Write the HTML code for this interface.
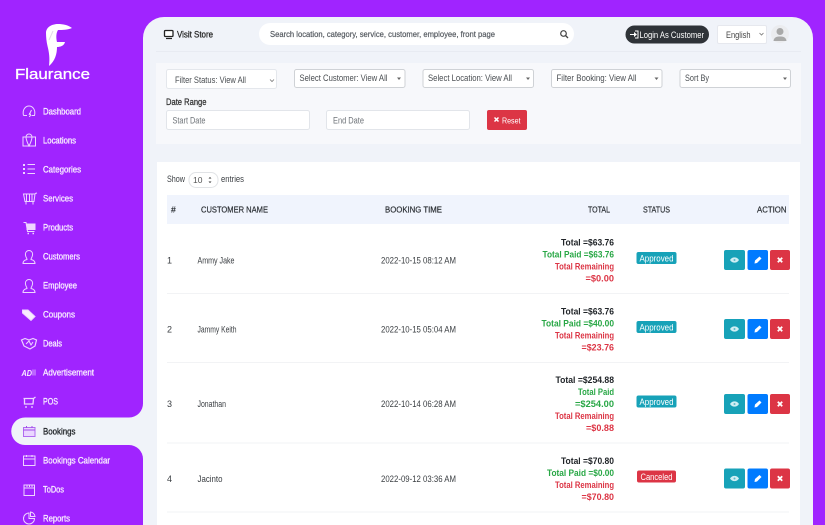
<!DOCTYPE html>
<html lang="en"><head><meta charset="utf-8"><title>Flaurance Bookings</title>
<style>
html,body{margin:0;padding:0;width:825px;height:525px;overflow:hidden;background:#a024ff}
svg{display:block}
text{font-family:"Liberation Sans",sans-serif;font-size:9px;fill:#2b2f33}
.nav{fill:#f8ecff;font-size:9px;stroke:#f8ecff;stroke-width:.3}
.ic{fill:none;stroke:#eed4ff;stroke-width:1}
.g{fill:#28a745;font-weight:bold;text-anchor:end}
.r{fill:#dc3545;font-weight:bold;text-anchor:end}
.k{fill:#212529;font-weight:bold;text-anchor:end}
.h{fill:#2a2e33;font-size:8.5px;stroke:#2a2e33;stroke-width:.2}
.m{fill:#555a60}
.w{fill:#fff}
.s{fill:#4a4e52}
.t{fill:#3a3e42}
</style></head><body>
<svg width="825" height="525" viewBox="0 0 825 525" xmlns="http://www.w3.org/2000/svg">
<rect width="825" height="525" fill="#a024ff"/>
<!-- main panel -->
<path d="M143 38a21 21 0 0 1 21-21H792a21 21 0 0 1 21 21V525H143Z" fill="#f0f3f9"/>
<!-- active nav -->
<rect x="125" y="400" width="20" height="62" fill="#f0f3f9"/>
<path d="M125 399H143V403A14 14 0 0 1 129 417.500H125Z" fill="#a024ff"/>
<path d="M125 445H129A14 14 0 0 1 143 459V464H125Z" fill="#a024ff"/>
<path d="M143 417.500H25A13.750 13.750 0 0 0 25 445H143Z" fill="#f0f3f9"/>
<!-- logo -->
<path d="M46 33C46 27 52 24 58 24C63 24 68 25 72 28C68 30 62 30 58 30C56 33 56 38 57 42L65 42C64 46 60 47 57 47C57 54 55 61 49 66C50 58 49 52 47.500 46C46.500 42 46 37 46 33Z" fill="#fff"/>
<path d="M53 31L49 40" stroke="#e2dbe8" stroke-width="1" fill="none"/>
<text x="15" y="79" class="w" style="font-size:15px;stroke:#fff;stroke-width:.3" textLength="75" lengthAdjust="spacingAndGlyphs">Flaurance</text>
<!-- nav icons -->
<g class="ic">
<path d="M23.500 115.500C22 109 26 106 29 106S36 109 34.500 115.500H31.500M27 115.500H23.500M29 115L31.500 110M29 116.500a1.500 1.500 0 0 0 0-3"/>
<path d="M23 137H26M32 137H35.500V146H23V137ZM29 134a3 3 0 0 1 3 3C32 140 29 146 29 146S26 140 26 137a3 3 0 0 1 3-3Z"/>
<path d="M27.500 164.500H35M27.500 169H35M27.500 173.500H35"/>
<path d="M23.500 194H35L34 201.500H25ZM26.500 194V201M29.500 194V201M32 194V201M26 202V204.500M33 202V204.500M35 193.500l2-.5"/>
<path d="M23.500 222.500H26L27.500 231.500H34.500"/>
<path d="M27 224H35V229.500H27Z" fill="#eed4ff"/>
<path d="M27.500 233.500h1.500M32.500 233.500h1.500" stroke-width="1.500"/>
<path d="M29 250.500a3.600 3.600 0 0 1 3.600 3.600C32.600 257.500 31 258 31 259.500C33.500 260 35 261 35 263.500H23C23 261 24.500 260 27 259.500C27 258 25.400 257.500 25.400 254.100A3.600 3.600 0 0 1 29 250.500Z"/>
<path d="M29 279.500a3.600 3.600 0 0 1 3.600 3.600C32.600 286.500 31 287 31 288.500C33.500 289 35 290 35 292.500H23C23 290 24.500 289 27 288.500C27 287 25.400 286.500 25.400 283.100A3.600 3.600 0 0 1 29 279.500Z"/>
<path d="M22.500 310H28L35 316.500L31 320.500L22.500 313Z" fill="#f8ecff"/>
<path d="M21.500 340L25 338.500L29 340L33 338.500L36.500 340L35 346L30 349L24 346Z" stroke-width="1.200"/>
<path d="M26 344L29 341L31 345L33 342"/>
<path d="M23.500 398.500H33.500L33 404H24.500V398.500M25 407h2M31 407h2M33.500 398.500l2-1.500" stroke-width="1.300"/>
<path d="M23.500 456H35V465.500H23.500ZM23.500 459H35M26.500 455V457M32 455V457"/>
<path d="M24 485H34.500V495.500H24ZM24 488H34.500M27 485V487M29.500 485V487M32 485V487"/>
<path d="M29 513a5.500 5.500 0 1 0 5.500 5.500H29ZM30.500 512a5 5 0 0 1 4.500 4.500H30.500Z"/>
</g>
<path d="M23.500 427.500H35V436.500H23.500Z" fill="#ead6ff" stroke="#b06cf0"/>
<path d="M23.500 430H35M26.500 426V428M32 426V428" stroke="#a24ee8" fill="none"/>
<rect x="23" y="164" width="2" height="2" fill="#eed4ff"/><rect x="23" y="168" width="2" height="2" fill="#eed4ff"/><rect x="23" y="172" width="2" height="2" fill="#eed4ff"/>
<text x="21.500" y="376" style="font-size:8.500px;font-weight:bold;font-style:italic;fill:#f8ecff" textLength="10.500" lengthAdjust="spacingAndGlyphs">AD</text>
<path d="M33 369.500V375.500M35 369.500V375.500" stroke="#d9a8ff" fill="none"/>
<!-- nav labels -->
<text x="43" y="114.500" class="nav" textLength="38" lengthAdjust="spacingAndGlyphs">Dashboard</text>
<text x="43" y="143.500" class="nav" textLength="33" lengthAdjust="spacingAndGlyphs">Locations</text>
<text x="43" y="172.500" class="nav" textLength="38" lengthAdjust="spacingAndGlyphs">Categories</text>
<text x="43" y="201.500" class="nav" textLength="30" lengthAdjust="spacingAndGlyphs">Services</text>
<text x="43" y="230.500" class="nav" textLength="30" lengthAdjust="spacingAndGlyphs">Products</text>
<text x="43" y="259.500" class="nav" textLength="37" lengthAdjust="spacingAndGlyphs">Customers</text>
<text x="43" y="288.500" class="nav" textLength="34" lengthAdjust="spacingAndGlyphs">Employee</text>
<text x="43" y="317.500" class="nav" textLength="32" lengthAdjust="spacingAndGlyphs">Coupons</text>
<text x="43" y="346.500" class="nav" textLength="19" lengthAdjust="spacingAndGlyphs">Deals</text>
<text x="43" y="375.500" class="nav" textLength="51" lengthAdjust="spacingAndGlyphs">Advertisement</text>
<text x="43" y="404.500" class="nav" textLength="15" lengthAdjust="spacingAndGlyphs">POS</text>
<text x="43" y="434.500" style="fill:#212529;stroke:#212529;stroke-width:.3" textLength="32.500" lengthAdjust="spacingAndGlyphs">Bookings</text>
<text x="43" y="463.500" class="nav" textLength="67" lengthAdjust="spacingAndGlyphs">Bookings Calendar</text>
<text x="43" y="492.500" class="nav" textLength="21" lengthAdjust="spacingAndGlyphs">ToDos</text>
<text x="43" y="521.500" class="nav" textLength="27" lengthAdjust="spacingAndGlyphs">Reports</text>
<!-- topbar -->
<rect x="164.500" y="30.500" width="8.500" height="6" rx="1" fill="#fff" stroke="#222" stroke-width="1.300"/>
<path d="M166 38.500H172" stroke="#222" stroke-width="1.200"/>
<text x="177" y="37.500" style="fill:#222;stroke:#222;stroke-width:.25" textLength="36" lengthAdjust="spacingAndGlyphs">Visit Store</text>
<rect x="259" y="23" width="315" height="22" rx="11" fill="#fff"/>
<text x="270" y="37" class="m" style="font-size:8.500px;stroke:#555a60;stroke-width:.2" textLength="225" lengthAdjust="spacingAndGlyphs">Search location, category, service, customer, employee, front page</text>
<circle cx="563.500" cy="33.500" r="2.800" fill="none" stroke="#444" stroke-width="1.200"/>
<path d="M565.500 35.500L568 38" stroke="#444" stroke-width="1.300"/>
<rect x="625.500" y="25.500" width="83.500" height="18" rx="9" fill="#2f3338"/>
<path d="M630 35H634V37L637 34.500L634 32V34H630Z" fill="#fff"/>
<path d="M635 31H638V38H635" fill="none" stroke="#fff" stroke-width="1"/>
<text x="639.500" y="38" class="w" textLength="64.500" lengthAdjust="spacingAndGlyphs">Login As Customer</text>
<rect x="717.500" y="25.500" width="49" height="18" rx="1.500" fill="#fff" stroke="#e6e8ee"/>
<text x="726" y="38" style="fill:#444" textLength="24.500" lengthAdjust="spacingAndGlyphs">English</text>
<path d="M759.500 33L761.500 35L763.500 33" fill="none" stroke="#777" stroke-width=".8"/>
<circle cx="780" cy="34" r="9" fill="#ebecef"/>
<circle cx="780" cy="31.500" r="3.500" fill="#a9a9a9"/>
<path d="M773.500 41C774 37 777 36.500 780 36.500S786 37 786.500 41Z" fill="#a9a9a9"/>
<rect x="156" y="51" width="645" height="1" fill="#e8ebf2"/>
<!-- filters -->
<rect x="156" y="63" width="645" height="81" fill="#f7f8fb"/>
<rect x="166.500" y="69.500" width="110" height="19" rx="2" fill="#fff" stroke="#e4e7ec"/>
<text x="175" y="83" class="s" textLength="71" lengthAdjust="spacingAndGlyphs">Filter Status: View All</text>
<path d="M270 79.500L272 81.500L274 79.500" fill="none" stroke="#777" stroke-width=".8"/>
<g fill="#fff" stroke="#cfd2d6">
<rect x="294.500" y="69.500" width="110.500" height="18" rx="2"/>
<rect x="423" y="69.500" width="110.500" height="18" rx="2"/>
<rect x="551.500" y="69.500" width="110.500" height="18" rx="2"/>
<rect x="680" y="69.500" width="110.500" height="18" rx="2"/>
</g>
<text x="299.500" y="81" class="s" textLength="88" lengthAdjust="spacingAndGlyphs">Select Customer: View All</text>
<text x="428" y="81" class="s" textLength="84" lengthAdjust="spacingAndGlyphs">Select Location: View All</text>
<text x="556.500" y="81" class="s" textLength="80" lengthAdjust="spacingAndGlyphs">Filter Booking: View All</text>
<text x="685" y="81" class="s" textLength="24" lengthAdjust="spacingAndGlyphs">Sort By</text>
<g fill="#666">
<path d="M397 77.500h4l-2 2.500Z"/><path d="M526 77.500h4l-2 2.500Z"/><path d="M654.500 77.500h4l-2 2.500Z"/><path d="M783 77.500h4l-2 2.500Z"/>
</g>
<text x="166" y="105" style="fill:#333;stroke:#333;stroke-width:.25" textLength="40.500" lengthAdjust="spacingAndGlyphs">Date Range</text>
<rect x="166.500" y="110.500" width="143" height="19" rx="2" fill="#fff" stroke="#e2e5ea"/>
<rect x="326.500" y="110.500" width="143" height="19" rx="2" fill="#fff" stroke="#e2e5ea"/>
<text x="172.500" y="123.500" style="fill:#6e7378" textLength="33" lengthAdjust="spacingAndGlyphs">Start Date</text>
<text x="333" y="123.500" style="fill:#6e7378" textLength="31" lengthAdjust="spacingAndGlyphs">End Date</text>
<rect x="487" y="110" width="40" height="20" rx="2" fill="#dc3545"/>
<path d="M494.500 117.500L498.500 121.500M498.500 117.500L494.500 121.500" stroke="#fff" stroke-width="1.500"/>
<text x="502" y="123.500" class="w" style="font-size:8.500px" textLength="18.500" lengthAdjust="spacingAndGlyphs">Reset</text>
<!-- table card -->
<rect x="157" y="162" width="643" height="363" fill="#fff"/>
<text x="167" y="182" class="t" textLength="18" lengthAdjust="spacingAndGlyphs">Show</text>
<rect x="189" y="172.500" width="29" height="15" rx="7" fill="#fff" stroke="#e1e3e6"/>
<text x="193" y="183" style="fill:#555;font-size:8.500px">10</text>
<path d="M208.500 178.500L210 177L211.500 178.500ZM208.500 181.500L210 183L211.500 181.500Z" fill="#333"/>
<text x="221" y="182" class="t" textLength="23" lengthAdjust="spacingAndGlyphs">entries</text>
<rect x="167" y="195" width="622" height="29" fill="#f0f4fd"/>
<text x="171" y="212.500" class="h" textLength="5">#</text>
<text x="201" y="212.500" class="h" textLength="67" lengthAdjust="spacingAndGlyphs">CUSTOMER NAME</text>
<text x="385" y="212.500" class="h" textLength="57" lengthAdjust="spacingAndGlyphs">BOOKING TIME</text>
<text x="588" y="212.500" class="h" textLength="22" lengthAdjust="spacingAndGlyphs">TOTAL</text>
<text x="643" y="212.500" class="h" textLength="27" lengthAdjust="spacingAndGlyphs">STATUS</text>
<text x="757" y="212.500" class="h" textLength="29.500" lengthAdjust="spacingAndGlyphs">ACTION</text>
<g fill="#f2f3f5"><rect x="167" y="293" width="622" height="1"/><rect x="167" y="362" width="622" height="1"/><rect x="167" y="442.500" width="622" height="1"/><rect x="167" y="511.500" width="622" height="1"/></g>
<!-- row 1 -->
<text x="167" y="263.500" class="t">1</text>
<text x="197.500" y="263.500" class="t" textLength="37" lengthAdjust="spacingAndGlyphs">Ammy Jake</text>
<text x="381" y="263.500" class="t" textLength="75" lengthAdjust="spacingAndGlyphs">2022-10-15 08:12 AM</text>
<text x="614" y="245.500" class="k" textLength="53" lengthAdjust="spacingAndGlyphs">Total =$63.76</text>
<text x="614" y="257.500" class="g" textLength="71.500" lengthAdjust="spacingAndGlyphs">Total Paid =$63.76</text>
<text x="614" y="269.500" class="r" textLength="59" lengthAdjust="spacingAndGlyphs">Total Remaining</text>
<text x="614" y="281.500" class="r" textLength="28.500" lengthAdjust="spacingAndGlyphs">=$0.00</text>
<rect x="636.500" y="252" width="40" height="12" rx="2" fill="#17a2b8"/>
<text x="639.500" y="261.500" class="w" textLength="34" lengthAdjust="spacingAndGlyphs">Approved</text>
<!-- row 2 -->
<text x="167" y="332.500" class="t">2</text>
<text x="197.500" y="332.500" class="t" textLength="39" lengthAdjust="spacingAndGlyphs">Jammy Keith</text>
<text x="381" y="332.500" class="t" textLength="75" lengthAdjust="spacingAndGlyphs">2022-10-15 05:04 AM</text>
<text x="614" y="314.500" class="k" textLength="53" lengthAdjust="spacingAndGlyphs">Total =$63.76</text>
<text x="614" y="326.500" class="g" textLength="72.500" lengthAdjust="spacingAndGlyphs">Total Paid =$40.00</text>
<text x="614" y="338.500" class="r" textLength="59" lengthAdjust="spacingAndGlyphs">Total Remaining</text>
<text x="614" y="350.500" class="r" textLength="32.500" lengthAdjust="spacingAndGlyphs">=$23.76</text>
<rect x="636.500" y="321" width="40" height="12" rx="2" fill="#17a2b8"/>
<text x="639.500" y="330.500" class="w" textLength="34" lengthAdjust="spacingAndGlyphs">Approved</text>
<!-- row 3 -->
<text x="167" y="407" class="t">3</text>
<text x="197.500" y="407" class="t" textLength="28.500" lengthAdjust="spacingAndGlyphs">Jonathan</text>
<text x="381" y="407" class="t" textLength="75" lengthAdjust="spacingAndGlyphs">2022-10-14 06:28 AM</text>
<text x="614" y="383" class="k" textLength="58.500" lengthAdjust="spacingAndGlyphs">Total =$254.88</text>
<text x="614" y="395" class="g" textLength="36" lengthAdjust="spacingAndGlyphs">Total Paid</text>
<text x="614" y="407" class="g" textLength="39" lengthAdjust="spacingAndGlyphs">=$254.00</text>
<text x="614" y="419" class="r" textLength="59" lengthAdjust="spacingAndGlyphs">Total Remaining</text>
<text x="614" y="431" class="r" textLength="28" lengthAdjust="spacingAndGlyphs">=$0.88</text>
<rect x="636.500" y="395.500" width="40" height="12" rx="2" fill="#17a2b8"/>
<text x="639.500" y="405" class="w" textLength="34" lengthAdjust="spacingAndGlyphs">Approved</text>
<!-- row 4 -->
<text x="167" y="482" class="t">4</text>
<text x="197.500" y="482" class="t" textLength="25" lengthAdjust="spacingAndGlyphs">Jacinto</text>
<text x="381" y="482" class="t" textLength="75" lengthAdjust="spacingAndGlyphs">2022-09-12 03:36 AM</text>
<text x="614" y="464" class="k" textLength="53" lengthAdjust="spacingAndGlyphs">Total =$70.80</text>
<text x="614" y="476" class="g" textLength="67" lengthAdjust="spacingAndGlyphs">Total Paid =$0.00</text>
<text x="614" y="488" class="r" textLength="59" lengthAdjust="spacingAndGlyphs">Total Remaining</text>
<text x="614" y="500" class="r" textLength="32.500" lengthAdjust="spacingAndGlyphs">=$70.80</text>
<rect x="637" y="470.500" width="39" height="12" rx="2" fill="#dc3545"/>
<text x="640.500" y="480" class="w" textLength="32" lengthAdjust="spacingAndGlyphs">Canceled</text>
<!-- action buttons -->
<g>
<rect x="724" y="250" width="21" height="20" rx="2" fill="#17a2b8"/><rect x="747.500" y="250" width="20.500" height="20" rx="2" fill="#007bff"/><rect x="770" y="250" width="20" height="20" rx="2" fill="#dc3545"/>
<path d="M730 260C732 256.500 737 256.500 739 260C737 263.500 732 263.500 730 260Z" fill="#cfeef3"/><circle cx="734.500" cy="260" r="1" fill="#5cb9c9"/>
<path d="M754.500 263.500L755 260.500L759.500 256.500L761.500 258.500L757 263Z" fill="#fff"/>
<path d="M777.800 257.800L782.200 262.200M782.200 257.800L777.800 262.200" stroke="#fff" stroke-width="1.800"/>
</g>
<g transform="translate(0,69)">
<rect x="724" y="250" width="21" height="20" rx="2" fill="#17a2b8"/><rect x="747.500" y="250" width="20.500" height="20" rx="2" fill="#007bff"/><rect x="770" y="250" width="20" height="20" rx="2" fill="#dc3545"/>
<path d="M730 260C732 256.500 737 256.500 739 260C737 263.500 732 263.500 730 260Z" fill="#cfeef3"/><circle cx="734.500" cy="260" r="1" fill="#5cb9c9"/>
<path d="M754.500 263.500L755 260.500L759.500 256.500L761.500 258.500L757 263Z" fill="#fff"/>
<path d="M777.800 257.800L782.200 262.200M782.200 257.800L777.800 262.200" stroke="#fff" stroke-width="1.800"/>
</g>
<g transform="translate(0,144)">
<rect x="724" y="250" width="21" height="20" rx="2" fill="#17a2b8"/><rect x="747.500" y="250" width="20.500" height="20" rx="2" fill="#007bff"/><rect x="770" y="250" width="20" height="20" rx="2" fill="#dc3545"/>
<path d="M730 260C732 256.500 737 256.500 739 260C737 263.500 732 263.500 730 260Z" fill="#cfeef3"/><circle cx="734.500" cy="260" r="1" fill="#5cb9c9"/>
<path d="M754.500 263.500L755 260.500L759.500 256.500L761.500 258.500L757 263Z" fill="#fff"/>
<path d="M777.800 257.800L782.200 262.200M782.200 257.800L777.800 262.200" stroke="#fff" stroke-width="1.800"/>
</g>
<g transform="translate(0,218.500)">
<rect x="724" y="250" width="21" height="20" rx="2" fill="#17a2b8"/><rect x="747.500" y="250" width="20.500" height="20" rx="2" fill="#007bff"/><rect x="770" y="250" width="20" height="20" rx="2" fill="#dc3545"/>
<path d="M730 260C732 256.500 737 256.500 739 260C737 263.500 732 263.500 730 260Z" fill="#cfeef3"/><circle cx="734.500" cy="260" r="1" fill="#5cb9c9"/>
<path d="M754.500 263.500L755 260.500L759.500 256.500L761.500 258.500L757 263Z" fill="#fff"/>
<path d="M777.800 257.800L782.200 262.200M782.200 257.800L777.800 262.200" stroke="#fff" stroke-width="1.800"/>
</g>
</svg>
</body></html>
